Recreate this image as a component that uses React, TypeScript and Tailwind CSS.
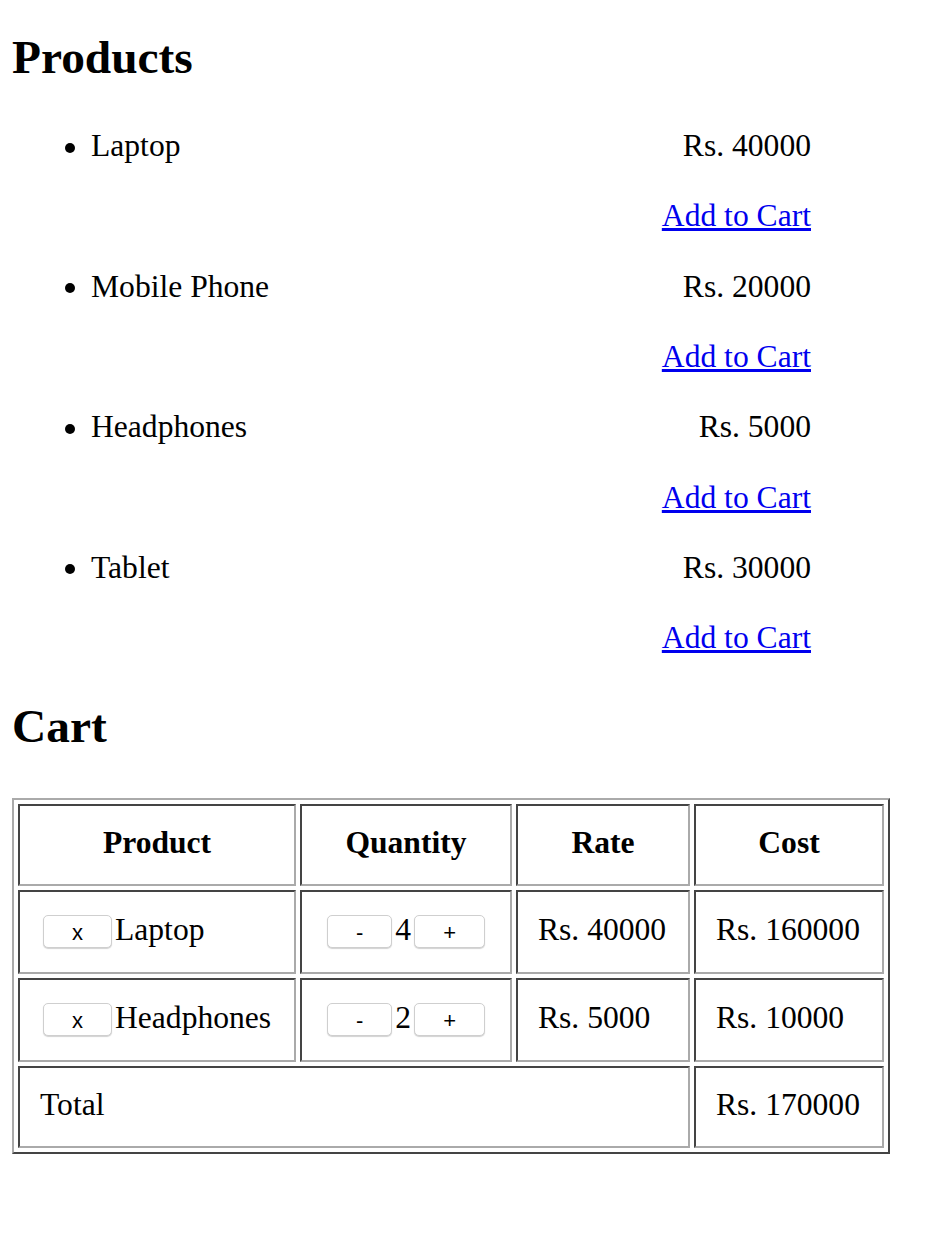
import React from "react";

interface Product {
  name: string;
  price: number;
}

interface CartItem {
  name: string;
  qty: number;
  rate: number;
}

const products: Product[] = [
  { name: "Laptop", price: 40000 },
  { name: "Mobile Phone", price: 20000 },
  { name: "Headphones", price: 5000 },
  { name: "Tablet", price: 30000 },
];

const cart: CartItem[] = [
  { name: "Laptop", qty: 4, rate: 40000 },
  { name: "Headphones", qty: 2, rate: 5000 },
];

// inset look of a table border="1" cell
const cell =
  "border-2 border-t-[#444] border-l-[#444] border-r-[#aaa] border-b-[#aaa] px-[20px] pb-[3px] align-middle";

function SmallButton({ label }: { label: string }) {
  return (
    <button className="mx-[3px] inline-block rounded-[5px] border border-[#cfcfcf] bg-white px-[28px] pt-[6px] pb-[3px] font-['Liberation_Sans',Arial,sans-serif] text-[22px] leading-[22px] text-black shadow-[0_1px_1px_rgba(0,0,0,0.18)]">
      {label}
    </button>
  );
}

export default function App() {
  const total = cart.reduce((s, c) => s + c.qty * c.rate, 0);

  return (
    <main className="min-h-screen bg-white px-[12px] pt-[30px] font-['Liberation_Serif','Times_New_Roman',serif] text-[31.6px] leading-[36px] text-black">
      <h2 className="text-[47.4px] font-bold leading-[54px]">Products</h2>

      <ul className="mt-[27px] w-[799px] pl-[53px]">
        {products.map((p) => (
          <li key={p.name}>
            <div className="flex h-[70.3px] items-center">
              <span className="mt-[3px] mr-[16px] h-[10px] w-[10px] shrink-0 rounded-full bg-black" />
              <span className="flex-1">{p.name}</span>
              <span>Rs. {p.price}</span>
            </div>
            <div className="flex h-[70.3px] items-center justify-end">
              <a href="#" className="text-[#0000ee] underline">
                Add to Cart
              </a>
            </div>
          </li>
        ))}
      </ul>

      <h2 className="mt-[25.5px] text-[47.4px] font-bold leading-[54px]">Cart</h2>

      <table className="mt-[45px] w-[878px] table-fixed border-separate border-spacing-[4px] border-2 border-t-[#aaa] border-l-[#aaa] border-r-[#444] border-b-[#444]">
        <thead>
          <tr className="h-[82px]">
            <th className={`${cell} w-[278px] text-center`}>Product</th>
            <th className={`${cell} w-[212px] text-center`}>Quantity</th>
            <th className={`${cell} w-[174px] text-center`}>Rate</th>
            <th className={`${cell} w-[190px] text-center`}>Cost</th>
          </tr>
        </thead>
        <tbody>
          {cart.map((c) => (
            <tr key={c.name} className="h-[84px]">
              <td className={`${cell} whitespace-nowrap`}>
                <SmallButton label="x" />
                {c.name}
              </td>
              <td className={`${cell} whitespace-nowrap text-center`}>
                <SmallButton label="-" />
                {c.qty}
                <SmallButton label="+" />
              </td>
              <td className={cell}>Rs. {c.rate}</td>
              <td className={cell}>Rs. {c.qty * c.rate}</td>
            </tr>
          ))}
          <tr className="h-[82px]">
            <td colSpan={3} className={cell}>
              Total
            </td>
            <td className={cell}>Rs. {total}</td>
          </tr>
        </tbody>
      </table>
    </main>
  );
}
